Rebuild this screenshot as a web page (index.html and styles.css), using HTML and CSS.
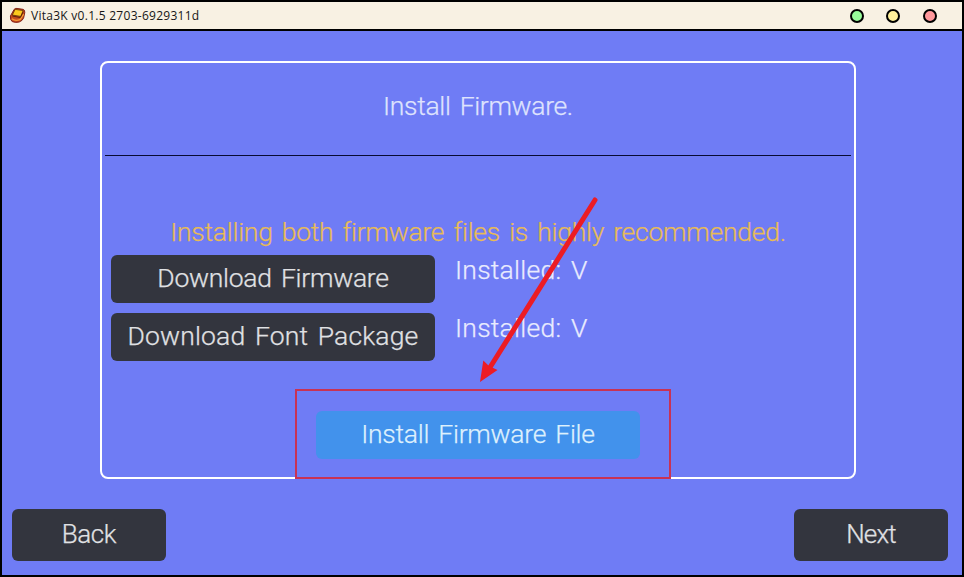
FILE: index.html
```html
<!DOCTYPE html>
<html lang="en">
<head>
<meta charset="utf-8">
<title>Vita3K</title>
<link rel="stylesheet" href="styles.css">
</head>
<body>
<div class="window">
  <header class="titlebar">
    <svg class="logo" viewBox="0 0 18 18">
      <path d="M1.5 9.5 5.5 2.5Q6.5 1.2 8.5 1.5L15 2.5Q17 3 16.7 6L15.5 11.5Q14.5 14.5 11 15.8 7 17 3.5 15.5 1 14 1.5 9.5Z" fill="#c64b1d" stroke="#7d1c13"/>
      <path d="M3 12.5Q7 15.5 12 13L15.5 7.5" fill="none" stroke="#f59b38" stroke-width="1.5"/>
      <path d="M6.5 2.5 15 3.8 12.5 10 3.5 8.5Z" fill="#fcc91d" stroke="#5a2b09" stroke-width=".8"/>
      <path d="M3.5 9.5 12 11.2 15 5" fill="none" stroke="#5a2108"/>
    </svg>
    <span class="caption">Vita3K v0.1.5 2703-6929311d</span>
    <span class="dot green"></span>
    <span class="dot yellow"></span>
    <span class="dot red"></span>
  </header>
  <main class="screen">
    <section class="panel">
      <h1 class="heading">Install Firmware.</h1>
      <p class="notice">Installing both firmware files is highly recommended.</p>
      <div class="row">
        <button class="button wide">Download Firmware</button>
        <span class="status">Installed: V</span>
      </div>
      <div class="row">
        <button class="button wide font-package">Download Font Package</button>
        <span class="status">Installed: V</span>
      </div>
      <button class="button wide install">Install Firmware File</button>
    </section>
    <nav class="nav">
      <button class="button step">Back</button>
      <button class="button step next">Next</button>
    </nav>
  </main>
  <div class="highlight"></div>
  <svg class="arrow" viewBox="0 0 130 196">
    <path d="M115 10 9 179" stroke="#ec1c24" stroke-width="5" stroke-linecap="round"/>
    <path d="M0 192 3.3 170.5 9 176 17.5 180Z" fill="#ec1c24"/>
  </svg>
</div>
</body>
</html>
```

FILE: styles.css
```css
* { box-sizing: border-box; }

body {
  margin: 0;
  background: #000;
  font-family: Roboto, "Liberation Sans", sans-serif;
}

.window {
  position: relative;
  width: 964px;
  height: 577px;
  border: 2px solid #000;
  background: #6f7cf5;
  display: flex;
  flex-direction: column;
}

.titlebar {
  height: 29px;
  flex: none;
  display: flex;
  align-items: center;
  padding: 0 25px 0 7px;
  background: #f8f1e3;
  border-bottom: 2px solid #000;
}

.logo { width: 17px; height: 17px; }

.caption {
  margin: 0 auto 0 5px;
  font: 12px "Open Sans", "Noto Sans", sans-serif;
  letter-spacing: .27px;
  color: #161616;
  white-space: nowrap;
}

.dot {
  width: 14px;
  height: 14px;
  border: 2px solid #000;
  border-radius: 50%;
}
.dot + .dot { margin-left: 22px; }
.dot.red { margin-left: 23px; }
.green { background: #98fb9a; }
.yellow { background: #fff09b; }
.red { background: #ff989c; }

.screen {
  flex: 1;
  display: flex;
  flex-direction: column;
  align-items: center;
  padding: 30px 14px 0 10px;
  font-size: 26.5px;
  font-weight: 300;
  letter-spacing: -.26px;
  word-spacing: 3px;
  -webkit-text-stroke: .25px;
}

.panel {
  width: 756px;
  height: 418px;
  flex: none;
  margin-right: 4px;
  border: 2px solid #fff;
  border-radius: 8px;
  padding: 0 3px;
  display: flex;
  flex-direction: column;
}

.heading {
  margin: 0 0 61px;
  height: 93px;
  padding-top: 27px;
  border-bottom: 1px solid #080b32;
  text-align: center;
  font-size: 26.5px;
  font-weight: 300;
  letter-spacing: -.33px;
  line-height: 32px;
  color: #dfe3fd;
}

.notice {
  margin: 0;
  height: 38px;
  text-align: center;
  line-height: 30px;
  color: #e8bb55;
  white-space: nowrap;
}

.row {
  display: flex;
  margin: 0 0 10px 6px;
  gap: 20px;
}

.status {
  height: 32px;
  line-height: 30px;
  letter-spacing: .25px;
  color: #e9ebfe;
  white-space: nowrap;
}

.button {
  border: 0;
  border-radius: 6px;
  padding: 0 0 2px;
  background: #33353e;
  color: #e0e1e4;
  font: inherit;
  letter-spacing: inherit;
  word-spacing: inherit;
  white-space: nowrap;
}
.wide { width: 324px; height: 48px; padding-bottom: 4px; }
.font-package { letter-spacing: .15px; }
.install {
  align-self: center;
  margin-top: 40px;
  background: #4292ec;
  color: #def0fd;
}

.nav {
  width: 100%;
  margin-top: 30px;
  display: flex;
  justify-content: space-between;
}
.step { width: 154px; height: 52px; font-size: 26px; letter-spacing: -.4px; }
.next { letter-spacing: -.8px; }

.highlight {
  position: absolute;
  left: 293px;
  top: 387px;
  width: 376px;
  height: 90px;
  border: 2px solid #c83254;
}

.arrow {
  position: absolute;
  left: 478px;
  top: 188px;
  width: 130px;
  height: 196px;
}
```
